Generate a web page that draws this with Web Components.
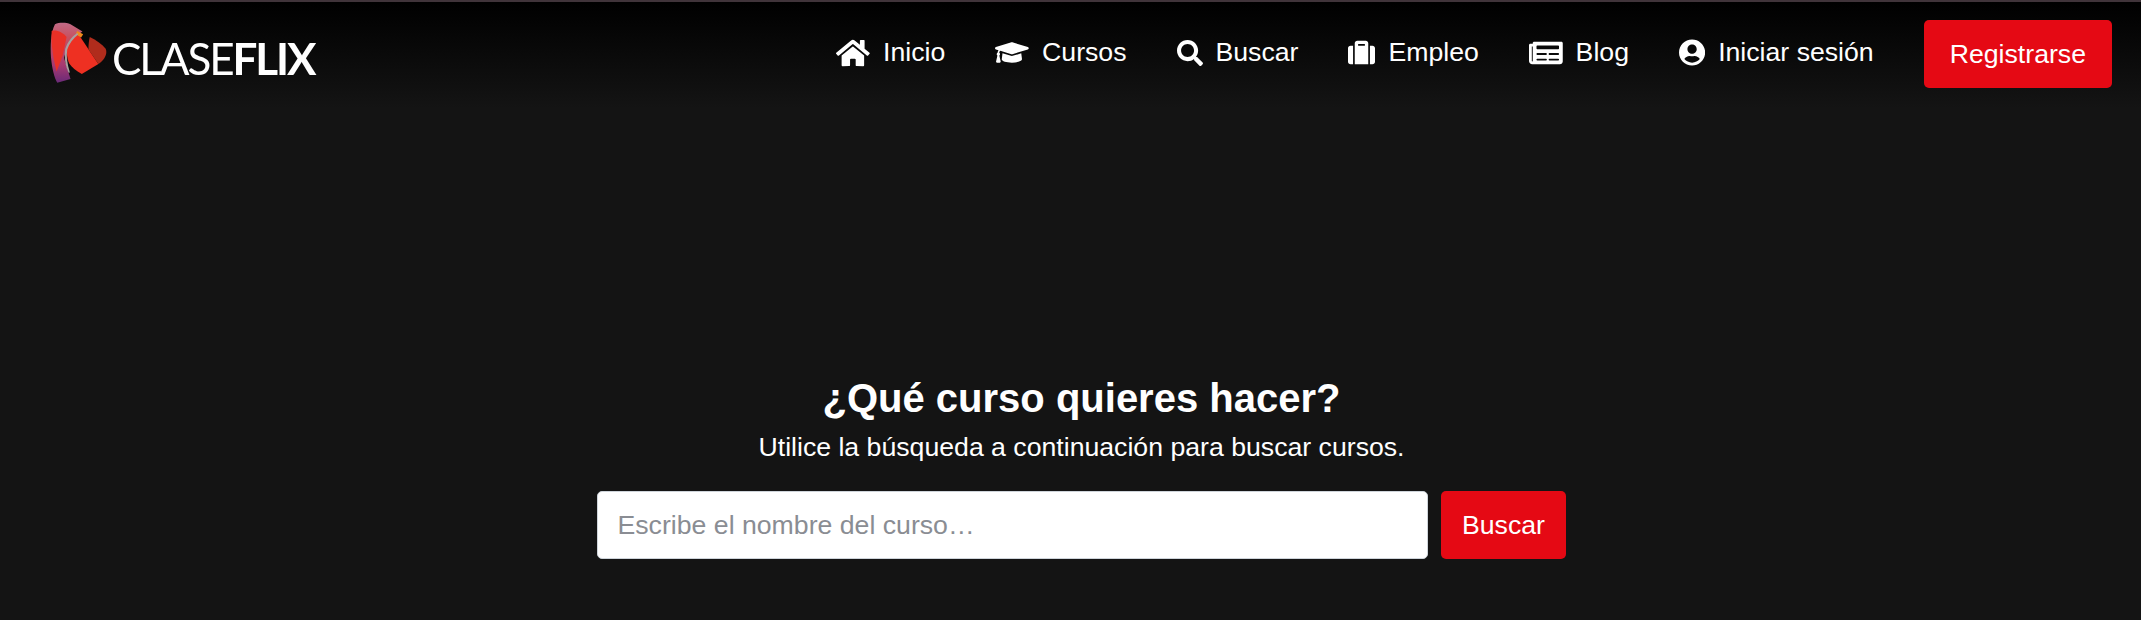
<!DOCTYPE html>
<html lang="es">
<head>
<meta charset="utf-8">
<title>Claseflix</title>
<style>
  html, body { margin: 0; height: 100%; background: #141414; }
  body { font-family: "Liberation Sans", Arial, sans-serif; color: #fff; }
</style>
</head>
<body>
<site-header>
  <nav-link icon="home">Inicio</nav-link>
  <nav-link icon="cap">Cursos</nav-link>
  <nav-link icon="search">Buscar</nav-link>
  <nav-link icon="suitcase">Empleo</nav-link>
  <nav-link icon="news">Blog</nav-link>
  <nav-link icon="user">Iniciar sesión</nav-link>
  <red-button slot="action">Registrarse</red-button>
</site-header>
<search-hero>
  <span slot="title">¿Qué curso quieres hacer?</span>
  <span slot="text">Utilice la búsqueda a continuación para buscar cursos.</span>
</search-hero>

<script>
// viewBox, height in px, path
const icons = {
  home: ['0 0 576 512', 30, 'M280.37 148.26L96 300.11V464a16 16 0 0 0 16 16l112.06-.29a16 16 0 0 0 15.92-16V368a16 16 0 0 1 16-16h64a16 16 0 0 1 16 16v95.64a16 16 0 0 0 16 16.05L464 480a16 16 0 0 0 16-16V300L295.67 148.26a12.19 12.19 0 0 0-15.3 0zM571.6 251.47L488 182.56V44.05a12 12 0 0 0-12-12h-56a12 12 0 0 0-12 12v72.61L318.47 43a48 48 0 0 0-61 0L4.34 251.47a12 12 0 0 0-1.6 16.9l25.5 31A12 12 0 0 0 45.15 301l235.22-193.74a12.19 12.19 0 0 1 15.3 0L530.9 301a12 12 0 0 0 16.9-1.6l25.5-31a12 12 0 0 0-1.7-16.93z'],
  cap: ['0 0 640 512', 27, 'M622.34 153.2L343.4 67.5c-15.2-4.67-31.6-4.67-46.79 0L17.66 153.2c-23.54 7.23-23.54 38.36 0 45.59l48.63 14.94c-10.67 13.19-17.23 29.28-17.88 46.9C38.78 266.15 32 276.11 32 288c0 10.78 5.68 19.85 13.86 25.65L20.33 428.53C18.11 438.52 25.71 448 35.94 448h56.11c10.24 0 17.84-9.48 15.62-19.47L82.14 313.65C90.32 307.85 96 298.78 96 288c0-11.57-6.47-21.25-15.66-26.87.76-15.02 8.44-28.3 20.69-36.72L296.6 284.5c9.06 2.78 26.44 6.25 46.79 0l278.95-85.7c23.55-7.24 23.55-38.36 0-45.6zM352.79 315.09c-28.53 8.76-52.84 3.92-65.59 0l-145.02-44.55L128 384c0 35.35 85.96 64 192 64s192-28.65 192-64l-14.18-113.47-145.03 44.56z'],
  search: ['0 0 512 512', 26, 'M505 442.7L405.3 343c-4.5-4.5-10.6-7-17-7H372c27.6-35.3 44-79.7 44-128C416 93.1 322.9 0 208 0S0 93.1 0 208s93.1 208 208 208c48.3 0 92.7-16.4 128-44v16.3c0 6.4 2.5 12.5 7 17l99.7 99.7c9.4 9.4 24.6 9.4 33.9 0l28.3-28.3c9.4-9.4 9.4-24.6.1-34zM208 336c-70.7 0-128-57.2-128-128 0-70.7 57.2-128 128-128 70.7 0 128 57.2 128 128 0 70.7-57.2 128-128 128z'],
  suitcase: ['0 0 512 512', 27, 'M128 480h256V80c0-26.5-21.5-48-48-48H176c-26.5 0-48 21.5-48 48v400zm64-384h128v32H192V96zm320 80v256c0 26.5-21.5 48-48 48h-48V128h48c26.5 0 48 21.5 48 48zM96 480H48c-26.5 0-48-21.5-48-48V176c0-26.5 21.5-48 48-48h48v352z'],
  news: ['0 0 576 512', 30, 'M552 64H88c-13.255 0-24 10.745-24 24v8H24c-13.255 0-24 10.745-24 24v272c0 30.928 25.072 56 56 56h472c26.51 0 48-21.49 48-48V88c0-13.255-10.745-24-24-24zM56 400a8 8 0 0 1-8-8V144h16v248a8 8 0 0 1-8 8zm236-16H140c-6.627 0-12-5.373-12-12v-8c0-6.627 5.373-12 12-12h152c6.627 0 12 5.373 12 12v8c0 6.627-5.373 12-12 12zm208 0H348c-6.627 0-12-5.373-12-12v-8c0-6.627 5.373-12 12-12h152c6.627 0 12 5.373 12 12v8c0 6.627-5.373 12-12 12zm-208-96H140c-6.627 0-12-5.373-12-12v-8c0-6.627 5.373-12 12-12h152c6.627 0 12 5.373 12 12v8c0 6.627-5.373 12-12 12zm208 0H348c-6.627 0-12-5.373-12-12v-8c0-6.627 5.373-12 12-12h152c6.627 0 12 5.373 12 12v8c0 6.627-5.373 12-12 12zm0-96H140c-6.627 0-12-5.373-12-12v-40c0-6.627 5.373-12 12-12h360c6.627 0 12 5.373 12 12v40c0 6.627-5.373 12-12 12z'],
  user: ['0 0 496 512', 27, 'M248 8C111 8 0 119 0 256s111 248 248 248 248-111 248-248S385 8 248 8zm0 96c48.6 0 88 39.4 88 88s-39.4 88-88 88-88-39.4-88-88 39.4-88 88-88zm0 344c-58.7 0-111.3-26.6-146.5-68.2 18.8-35.4 55.6-59.8 98.5-59.8 2.4 0 4.8.4 7.1 1.1 13 4.2 26.6 6.9 40.9 6.9 14.3 0 28-2.7 40.9-6.9 2.3-.7 4.7-1.1 7.1-1.1 42.9 0 79.7 24.4 98.5 59.8C359.3 421.4 306.7 448 248 448z']
};

class SiteLogo extends HTMLElement {
  connectedCallback() {
    this.attachShadow({ mode: 'open' }).innerHTML = `
      <style>
        :host { display: flex; align-items: center; gap: 4px; }
        svg { width: 58px; height: 63px; flex: none; filter: blur(.5px); }
        .name { font: 400 44px/1 Lato, sans-serif; letter-spacing: -2.1px; color: #fff; margin-top: 11px; filter: blur(.4px); }
        b { font-weight: 700; }
      </style>
      <svg viewBox="30 20 175 190">
        <defs>
          <linearGradient id="edge" x1="0" y1="0" x2="0" y2="1">
            <stop offset="0" stop-color="#c06a86"/><stop offset=".25" stop-color="#c8505e"/><stop offset=".7" stop-color="#a83a70"/><stop offset="1" stop-color="#6a2a78"/>
          </linearGradient>
        </defs>
        <path d="M45 30C58 24 78 24 92 30L128 52 90 78 72 130 92 195 52 206C42 190 36 160 33 130 31 95 32 55 45 30z" fill="url(#edge)"/>
        <path d="M35 50C50 46 68 54 80 68L68 125 50 172C42 140 32 95 35 50z" fill="#ea3026"/>
        <path d="M116 60L176 150 126 180C108 170 96 160 88 148 80 130 78 105 84 90 92 78 104 68 116 60z" fill="#ee3022"/>
        <path d="M112 50L130 60 124 70 108 60z" fill="#ee8a1c"/>
        <path d="M112 56C94 68 82 84 76 104 72 128 76 154 86 176L90 175C82 150 79 128 82 106 88 88 100 74 115 61z" fill="#a9a0a0"/>
        <path d="M150 68C170 78 188 90 198 104 204 118 196 136 176 150L146 106C146 92 147 80 150 68z" fill="#b02c1c"/>
      </svg>
      <span class="name">CLASE<b>FLIX</b></span>`;
  }
}

class NavLink extends HTMLElement {
  connectedCallback() {
    const ic = icons[this.getAttribute('icon')];
    this.attachShadow({ mode: 'open' }).innerHTML = `
      <style>
        :host { display: flex; align-items: center; gap: 13px; padding: 0 24.5px 0 25.5px; font-size: 26.67px; color: #fff; }
        svg { height: ${ic[1]}px; width: auto; fill: #fff; flex: none; }
      </style>
      <svg viewBox="${ic[0]}"><path fill-rule="evenodd" d="${ic[2]}"/></svg>
      <slot></slot>`;
  }
}

class RedButton extends HTMLElement {
  connectedCallback() {
    this.attachShadow({ mode: 'open' }).innerHTML = `
      <style>
        :host { display: flex; align-items: center; justify-content: center; height: 68px; padding: 0 var(--btn-pad, 26px); box-sizing: border-box;
                background: #e50914; color: #fff; border-radius: 5px; font-size: 26.67px; flex: none; }
      </style>
      <slot></slot>`;
  }
}

class SiteHeader extends HTMLElement {
  connectedCallback() {
    this.attachShadow({ mode: 'open' }).innerHTML = `
      <style>
        :host { display: flex; align-items: center; justify-content: space-between; height: 108px; box-sizing: border-box;
                border-top: 2px solid #40343a; padding: 0 29px 2px 50px;
                background: linear-gradient(#000, #141414); }
        nav { display: flex; align-items: center; }
        .links { display: flex; align-items: center; margin-right: 25.5px; padding-bottom: 3px; }
        site-logo { margin-bottom: 3px; }
      </style>
      <site-logo></site-logo>
      <nav>
        <div class="links"><slot></slot></div>
        <slot name="action"></slot>
      </nav>`;
  }
}

class SearchHero extends HTMLElement {
  connectedCallback() {
    this.attachShadow({ mode: 'open' }).innerHTML = `
      <style>
        :host { display: flex; flex-direction: column; align-items: center; padding: 262px 0 0 22px; --btn-pad: 21.5px; }
        h1 { margin: 0; font-size: 40px; line-height: 56px; font-weight: 700; }
        p { margin: 2px 0 0; font-size: 26.67px; line-height: 38px; }
        form { display: flex; gap: 13px; margin-top: 25px; }
        input { width: 831px; height: 68px; box-sizing: border-box; border: 1px solid #ced4da; border-radius: 5px; padding: 0 20px;
                background: #fff; font: 26.67px "Liberation Sans", Arial, sans-serif; color: #333; outline: none; }
        input::placeholder { color: #8a8d93; opacity: 1; }
      </style>
      <h1><slot name="title"></slot></h1>
      <p><slot name="text"></slot></p>
      <form>
        <input type="text" placeholder="Escribe el nombre del curso…">
        <red-button>Buscar</red-button>
      </form>`;
  }
}

customElements.define('site-logo', SiteLogo);
customElements.define('nav-link', NavLink);
customElements.define('red-button', RedButton);
customElements.define('site-header', SiteHeader);
customElements.define('search-hero', SearchHero);
</script>
</body>
</html>
